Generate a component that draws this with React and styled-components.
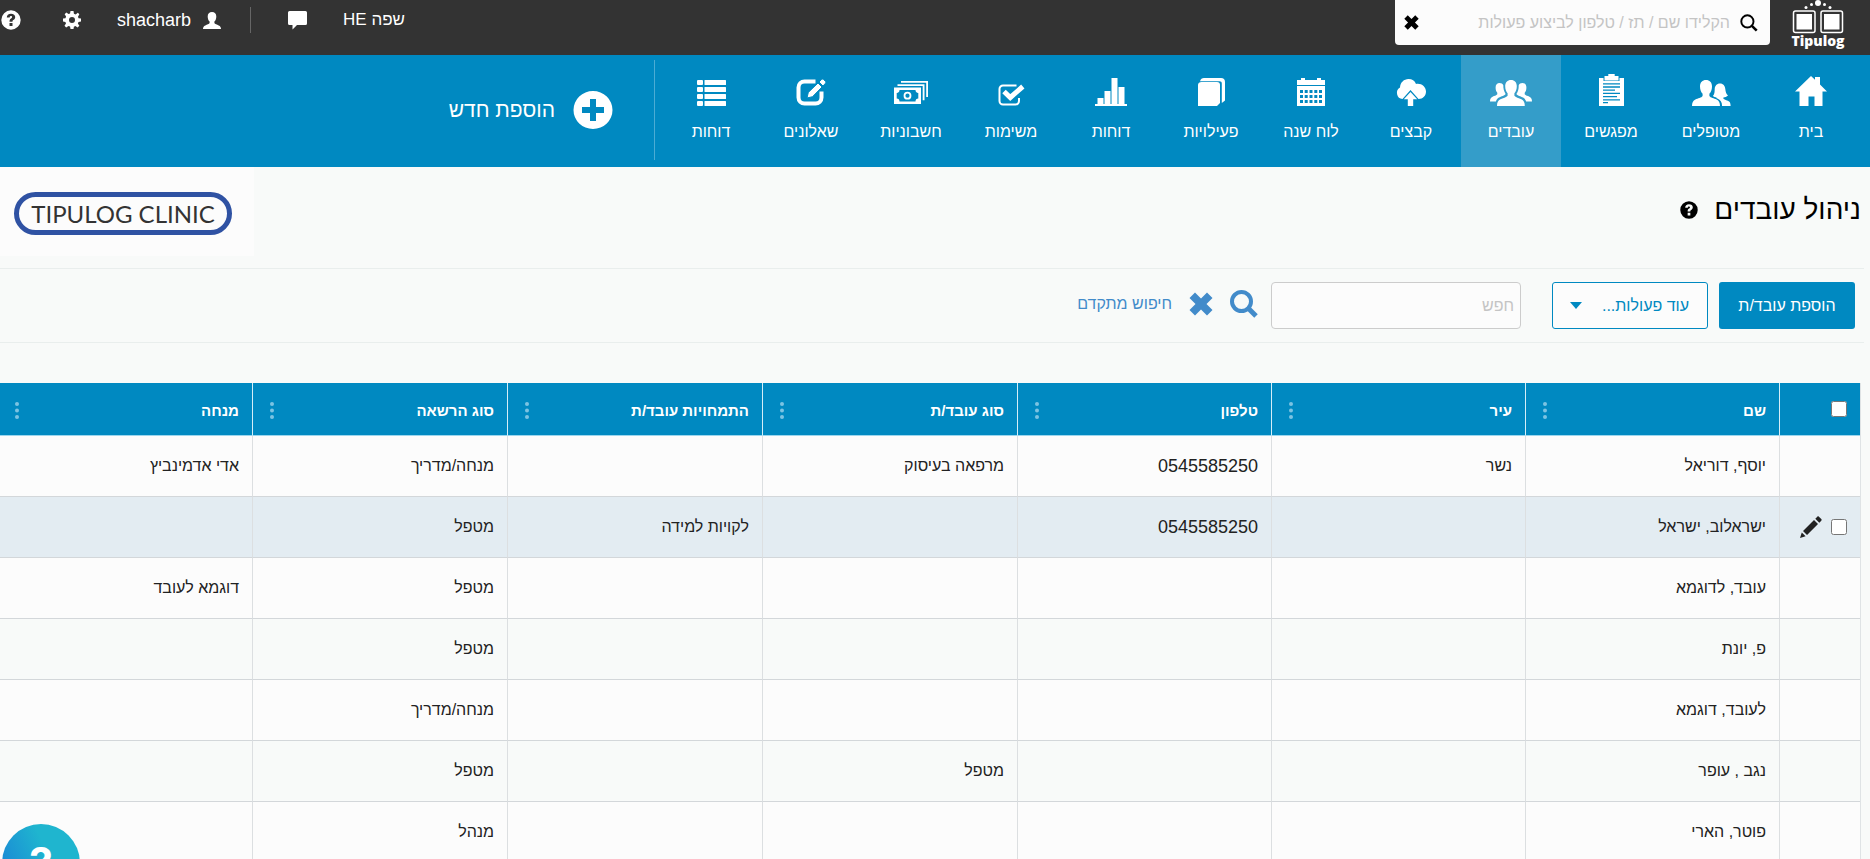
import styled, { createGlobalStyle } from "styled-components";

const GlobalStyle = createGlobalStyle`
  * {
    box-sizing: border-box;
  }

  html {
    scrollbar-width: none;
  }

  body {
    margin: 0;
    background: #f8faf9;
    color: #222;
    font-family: "Liberation Sans", Arial, sans-serif;
    font-size: 16px;
    overflow-x: hidden;
  }

  button, input, select {
    font: inherit;
    color: inherit;
  }

  button {
    padding: 0;
    border: 0;
    background: none;
    cursor: pointer;
  }

  a {
    color: inherit;
    text-decoration: none;
  }

  svg {
    display: block;
    flex: none;
  }
`;

/* ---------- icons ---------- */

const Icon = ({ w, h, children }) => (
  <svg width={w} height={h} viewBox={`0 0 ${w} ${h}`} fill="currentColor" aria-hidden="true">
    {children}
  </svg>
);

const HomeIcon = () => (
  <Icon w={32} h={30}>
    <path d="M16 0l4 3.8V1h5v7.6l7 7H27.500V30H19.500V20.500H13.500V30H4.500V15.600H0z" />
  </Icon>
);

const PatientsIcon = () => (
  <Icon w={39} h={26}>
    <path d="M14 0c3.600 0 6 2.300 6 6.500 0 3.200-1.100 5.700-2.600 7.200v2.300c1 1.800 4.800 2.300 7.200 3.500 2.400 1.200 3.400 3.200 3.400 6.500H0c0-3.300 1-5.300 3.400-6.500C5.800 18.300 9.600 17.800 10.600 16v-2.300C9.100 12.200 8 9.700 8 6.500 8 2.300 10.400 0 14 0z" />
    <path d="M28 3.500c3.300 0 5 2.400 5.300 5.500.3 3 .8 4.600 2.700 6.600-1.300 1.400-3 1.800-4.600 1.900v1.200c1.500 1.300 4.300 1.500 5.700 2.700 1.200 1 1.500 2.500 1.500 4.600h-8.500c-.1-4-1.600-6.200-4.700-7.500l-1.200-.5.500-.6c-1.500-.2-2.900-.6-3.800-1.500 1.800-2 1.700-4 1.800-6.900.2-3.100 2-5.500 5.300-5.500z" />
  </Icon>
);

const ClipboardIcon = () => (
  <Icon w={25} h={32}>
    <path d="M0 4h4.500v3h16V4H25v28H0z" />
    <path d="M5.500 2h3.800V0h6.400v2h3.800v4.500h-14z" />
    <path
      d="M4 9.800h17M4 13h17M4 16.200h12M4 19.400h17M4 22.600h14M4 25.800h17M4 28.600h5"
      stroke="#0089c1"
      strokeWidth="1.300"
      fill="none"
    />
  </Icon>
);

const TeamIcon = () => (
  <Icon w={42} h={26}>
    <path d="M21 0c3.600 0 5.800 2.300 5.800 6.300 0 3-1 5.500-2.400 7v2.500c1 1.700 4.600 2.300 7 3.500 2.300 1.200 3.400 3.200 3.400 6.700H7c0-3.500 1.100-5.500 3.400-6.700 2.400-1.200 6.200-1.800 7.200-3.500v-2.500c-1.400-1.500-2.400-4-2.400-7C15.200 2.300 17.400 0 21 0z" />
    <path d="M9.600 3c1.700 0 3.100.7 3.700 2.300-.1 3.200.6 6 2.300 8.600-.6 1.500-4.600 2.300-6.700 3.600-1.600 1-2.500 2.200-3 4H0c0-2.600.8-4 2.600-4.800 1.600-.8 3.800-1.100 4.700-2.400v-1.500C6.300 11.800 5.600 10 5.600 7.600 5.600 4.600 7.100 3 9.600 3z" />
    <path d="M32.400 3c-1.700 0-3.100.7-3.700 2.300.1 3.200-.6 6-2.300 8.600.6 1.500 4.600 2.300 6.700 3.600 1.600 1 2.500 2.200 3 4H42c0-2.600-.8-4-2.600-4.800-1.600-.8-3.800-1.100-4.700-2.400v-1.500c1-1 1.700-2.800 1.700-5.200C36.400 4.600 34.900 3 32.400 3z" />
  </Icon>
);

const CloudIcon = () => (
  <Icon w={30} h={27}>
    <path d="M6.500 20A6.200 6.200 0 0 1 4 8.500C4.200 3.500 8 0 12.500 0c3.600 0 6.300 1.900 7.500 4.900 5.300-1 10 2.700 10 7.600 0 4.300-3 7.500-7.500 7.500L14.500 11z" />
    <path d="M14.500 13l6.700 7.200h-4V27h-5.400v-6.800h-4z" />
  </Icon>
);

const CalendarIcon = () => (
  <Icon w={28} h={28}>
    <path d="M0 2h4V0h4v2h12V0h4v2h4v5H0z" />
    <path
      fillRule="evenodd"
      d="M0 8h28v20H0zM3 12h3v3H3zm4.700 0h3v3h-3zm4.800 0h3v3h-3zm4.800 0h3v3h-3zm4.700 0h3v3h-3zM3 17h3v3H3zm4.700 0h3v3h-3zm4.800 0h3v3h-3zm4.800 0h3v3h-3zm4.700 0h3v3h-3zM3 22h3v3H3zm4.700 0h3v3h-3zm4.800 0h3v3h-3zm4.800 0h3v3h-3zm4.700 0h3v3h-3z"
    />
  </Icon>
);

const BooksIcon = () => (
  <Icon w={27} h={28}>
    <path d="M0 7c0-2 1.500-3 3.500-3H19c2 0 3 1 3 3v18l-3 3H0z" />
    <path d="M2 3.200C2.700 1.200 4 0 6 0h17c2.600 0 4 1.500 4 4v18.500L23.800 25V5.500c0-1.500-.8-2.300-2.300-2.300z" />
  </Icon>
);

const ChartIcon = () => (
  <Icon w={32} h={28}>
    <path d="M0 26h2.500v-6h6v6h1V13h6v13h1V0h6v26h1V9h6v17H32v2H0z" />
  </Icon>
);

const TasksIcon = () => (
  <Icon w={27} h={22}>
    <path
      d="M18.500 1.500H5A3.500 3.500 0 0 0 1.500 5v12A3.500 3.500 0 0 0 5 20.500h12.500A3.500 3.500 0 0 0 21 17v-3"
      fill="none"
      stroke="currentColor"
      strokeWidth="2"
    />
    <path d="M6 7.500l6.300 6L24.800 2.500" fill="none" stroke="currentColor" strokeWidth="5" />
  </Icon>
);

const MoneyIcon = () => (
  <Icon w={34} h={25}>
    <path d="M7 0h27v16h-1.800V1.800H7zM3.500 3.200h27v16h-1.800V5H3.500z" />
    <path
      fillRule="evenodd"
      d="M0 6.500h27V23H0zM5.500 9c0 1.800-1 2.900-2.800 2.900v5.700c1.800 0 2.800 1 2.800 2.900h16c0-1.900 1-2.900 2.800-2.900v-5.700c-1.800 0-2.800-1.100-2.800-2.900z"
    />
    <circle cx="13.500" cy="14.700" r="3" fill="none" stroke="currentColor" strokeWidth="1.800" />
  </Icon>
);

const EditIcon = () => (
  <Icon w={30} h={27}>
    <path
      d="M19.500 2.500H8.500a6 6 0 0 0-6 6v10a6 6 0 0 0 6 6h11a6 6 0 0 0 6-6v-6"
      fill="none"
      stroke="currentColor"
      strokeWidth="4"
    />
    <path
      d="M11 19l1.300-5.600L22 4l4 4-9.500 9.700zM23 3l2.300-2.300c.8-.8 1.800-.8 2.500 0l1.400 1.400c.8.800.8 1.700 0 2.500L27 7z"
      stroke="#0089c1"
    />
  </Icon>
);

const ListIcon = () => (
  <Icon w={29} h={26}>
    {[0, 7, 14, 21].map((y) => (
      <g key={y}>
        <rect y={y} width="6" height="5" rx="1" />
        <rect x="7.500" y={y} width="21.500" height="5" rx="0.500" />
      </g>
    ))}
  </Icon>
);

const PlusIcon = () => (
  <Icon w={40} h={40}>
    <path
      fillRule="evenodd"
      d="M20 1a19.500 19 0 1 0 0 38 19.500 19 0 0 0 0-38zm-3 8h6v8h8v6h-8v8h-6v-8H9v-6h8z"
    />
  </Icon>
);

const UserIcon = () => (
  <Icon w={18} h={17}>
    <path d="M9 0c2.700 0 4.300 1.700 4.300 4.400 0 2.300-.7 4-1.900 5.100v1.600c.4 1 2.600 1.600 4.300 2.300C17.400 14.100 18 15.200 18 17H0c0-1.800.6-2.900 2.300-3.600 1.700-.7 3.900-1.300 4.300-2.300V9.500C5.400 8.400 4.700 6.700 4.700 4.400 4.700 1.700 6.300 0 9 0z" />
  </Icon>
);

const CogIcon = () => (
  <svg width="18" height="18" viewBox="0 0 24 24" fill="currentColor" aria-hidden="true">
    <path
      fillRule="evenodd"
      d="M10 0h4l.6 3.600 2.200.9L19.800 2.300l2 2L20 7.500l.7 2L24 10v4l-3.300.6-.9 2.200 2 3-2.300 2.200-3-1.900-2 .8L14 24h-4l-.6-3.200-2.100-.9-3.100 2L2 19.700l2-3-.8-2.100L0 14v-4l3.300-.5.8-2.200-1.900-3 2.200-2.200 3 2 2-.8zm2 8a4 4 0 1 0 0 8 4 4 0 0 0 0-8z"
    />
  </svg>
);

const HelpIcon = ({ size }) => (
  <svg width={size} height={size} viewBox="0 0 20 20" fill="currentColor" aria-hidden="true">
    <path
      fillRule="evenodd"
      d="M10 .3a9.700 9.700 0 1 0 0 19.400A9.700 9.700 0 0 0 10 .3zM8.500 13h3v3h-3zm0-1.200c0-2 .4-2.600 1.600-3.400.8-.5 1-.8 1-1.300 0-.7-.4-1-1.100-1-.9 0-1.300.5-1.300 1.500H5.800C5.800 5.200 7.400 3.700 10 3.700c2.600 0 4.200 1.300 4.200 3.300 0 1.400-.6 2.200-1.800 3-.8.5-.9.8-.9 1.800z"
    />
  </svg>
);

const ChatIcon = () => (
  <Icon w={19} h={19}>
    <path d="M1.500 0h16A1.500 1.500 0 0 1 19 1.500v11a1.500 1.500 0 0 1-1.500 1.500H9l-4.500 4.500V14h-3A1.500 1.500 0 0 1 0 12.500v-11A1.500 1.500 0 0 1 1.500 0z" />
  </Icon>
);

const SearchIcon = ({ size, stroke }) => (
  <svg width={size} height={size} viewBox="0 0 28 28" fill="none" stroke="currentColor" aria-hidden="true">
    <circle cx="11.500" cy="11.500" r="9.500" strokeWidth={stroke} />
    <path d="M18.500 18.500l7.500 7.500" strokeWidth={stroke + 1} />
  </svg>
);

const CloseIcon = ({ size }) => (
  <svg width={size} height={size} viewBox="0 0 24 24" fill="currentColor" aria-hidden="true">
    <path d="M6 0.500L12 6.500l6-6L23.500 6l-6 6 6 6-5.500 5.500-6-6-6 6L.5 18l6-6-6-6z" />
  </svg>
);

const PencilIcon = () => (
  <Icon w={22} h={22}>
    <path d="M0 22l1.800-5.600 3.800 3.800zM3 15L14 4l4 4L7 19zM15.300 2.700l2-2c.5-.5 1.100-.5 1.600 0l2.400 2.400c.5.500.5 1.100 0 1.600l-2 2z" />
  </Icon>
);

const DotsIcon = () => (
  <Icon w={4} h={17}>
    <circle cx="2" cy="2" r="2" />
    <circle cx="2" cy="8.500" r="2" />
    <circle cx="2" cy="15" r="2" />
  </Icon>
);

const BrandIcon = () => (
  <Icon w={52} h={34}>
    <circle cx="26" cy="3" r="3" />
    <circle cx="19.500" cy="4.500" r="1.500" />
    <circle cx="32.500" cy="4.500" r="1.500" />
    <circle cx="14" cy="7.500" r="1.500" />
    <circle cx="38" cy="7.500" r="1.500" />
    <g fill="none" stroke="currentColor" strokeWidth="1.500">
      <rect x="1.500" y="11" width="21.500" height="21.500" rx="2" />
      <rect x="29" y="11" width="21.500" height="21.500" rx="2" />
    </g>
    <rect x="4.500" y="14" width="15.500" height="15.500" />
    <rect x="32" y="14" width="15.500" height="15.500" />
  </Icon>
);

/* ---------- top bar ---------- */

const TopBar = styled.header`
  display: flex;
  align-items: flex-start;
  height: 55px;
  padding-right: 26px;
  background: #333;
  color: #fff;
`;

const Brand = styled.a`
  display: flex;
  flex-direction: column;
  align-items: center;
  width: 52px;
  font: 800 14px/14px "Open Sans", sans-serif;
`;

const QuickSearch = styled.form`
  display: flex;
  align-items: center;
  gap: 10px;
  width: 375px;
  height: 45px;
  margin-right: 22px;
  padding: 0 12px 0 9px;
  border-radius: 0 0 4px 4px;
  background: #fcfcfc;
  color: #000;
`;

const QuickInput = styled.input`
  flex: 1;
  min-width: 0;
  height: 40px;
  padding: 0;
  border: 0;
  outline: 0;
  background: none;

  &::placeholder {
    color: #c4c4c4;
    opacity: 1;
  }
`;

const UserMenu = styled.div`
  display: flex;
  align-items: center;
  height: 40px;
  margin-right: auto;
`;

const Language = styled.button`
  margin-left: 36px;
  font-size: 17px;
`;

const MenuDivider = styled.span`
  width: 1px;
  height: 26px;
  margin: 0 37px 0 29px;
  background: #666;
`;

const Account = styled.button`
  display: flex;
  align-items: center;
  gap: 12px;
  margin-left: 36px;
  font-size: 18px;
`;

const HelpLink = styled.a`
  margin: 0 42px 0 1px;
`;

/* ---------- main nav ---------- */

const Nav = styled.nav`
  display: flex;
  height: 112px;
  padding-right: 9px;
  background: #0089c1;
  color: #fff;
`;

const NavItem = styled.a`
  display: flex;
  flex-direction: column;
  align-items: center;
  width: 100px;
  background: ${({ $active }) => ($active ? "#349dc9" : "none")};
`;

const NavIcon = styled.span`
  display: flex;
  align-items: flex-end;
  height: 51px;
  margin-bottom: 17px;
`;

const AddNew = styled.button`
  display: flex;
  align-items: center;
  gap: 18px;
  margin: 5px 6px 7px 0;
  padding-right: 41px;
  border-right: 1px solid #4bacd4;
  font-size: 21px;
`;

/* ---------- page header ---------- */

const PageHeader = styled.div`
  display: flex;
  justify-content: space-between;
  height: 101px;
  padding-right: 9px;
`;

const Title = styled.h1`
  display: flex;
  align-items: center;
  gap: 16px;
  height: 86px;
  margin: 0;
  color: #000;
  font-size: 28px;
  font-weight: 400;
`;

const ClinicBox = styled.div`
  display: flex;
  align-items: center;
  justify-content: flex-end;
  width: 254px;
  height: 89px;
  padding: 4px 0 0 14px;
  background: #fcfcfc;
`;

const ClinicBadge = styled.div`
  display: flex;
  align-items: center;
  justify-content: center;
  width: 218px;
  height: 43px;
  border: 5px solid #2f52a3;
  border-radius: 22px;
  color: #333;
  font: 24px/32px Lato, sans-serif;
  white-space: nowrap;
`;

/* ---------- toolbar ---------- */

const Toolbar = styled.div`
  display: flex;
  align-items: center;
  height: 75px;
  margin: 0 6px 40px 0;
  padding-right: 9px;
  border: solid #e9eeed;
  border-width: 1px 0;
`;

const PrimaryButton = styled.button`
  width: 136px;
  height: 47px;
  border-radius: 3px;
  background: #0089c1;
  color: #fff;
`;

const SelectBox = styled.label`
  position: relative;
  margin: 0 11px 0 31px;
  color: #0089c1;
`;

const ActionSelect = styled.select`
  appearance: none;
  width: 156px;
  height: 47px;
  padding: 0 18px 0 30px;
  border: 1px solid #0089c1;
  border-radius: 3px;
  background: #fcfcfc;
`;

const Caret = styled.span`
  position: absolute;
  left: 18px;
  top: 20px;
  border: 6px solid transparent;
  border-top: 7px solid #0089c1;
  border-bottom: 0;
  pointer-events: none;
`;

const FilterInput = styled.input`
  width: 250px;
  height: 47px;
  padding: 0 6px;
  border: 1px solid #ccc;
  border-radius: 4px;
  background: #fcfcfc;

  &::placeholder {
    color: #c4c4c4;
    opacity: 1;
  }
`;

const LinkActions = styled.div`
  display: flex;
  align-items: center;
  gap: 17px;
  margin: 0 13px 3px 0;
  color: #428bca;

  button {
    color: inherit;
  }
`;

/* ---------- table ---------- */

const TableWrap = styled.div`
  margin-right: 9px;
  border-right: 1px solid #dfe3e5;
  overflow: hidden;
`;

const Table = styled.table`
  width: calc(100% + 3px);
  table-layout: fixed;
  border-collapse: separate;
  border-spacing: 0;
`;

const Col = styled.col`
  width: ${({ $width }) => $width};
`;

const HeadCell = styled.th`
  height: 53px;
  padding: 2px 13px 0 17px;
  border-left: 1px solid #d5eef8;
  border-bottom: 1px solid #9bd6ee;
  background: #0089c1;
  color: #fff;
  font-size: 15px;
  text-align: right;
`;

const HeadContent = styled.div`
  display: flex;
  align-items: center;
  justify-content: space-between;
`;

const ColumnMenu = styled.button`
  height: 24px;
  color: #7cc3e2;
`;

const Row = styled.tr`
  background: ${({ $hover }) => ($hover ? "#e3ecf2" : "#fcfcfc")};

  &:nth-child(even) {
    background: ${({ $hover }) => ($hover ? "#e3ecf2" : "#f8faf9")};
  }
`;

const Cell = styled.td`
  height: 61px;
  padding: 0 13px;
  border-left: 1px solid #dcdfe1;
  border-bottom: 1px solid #d3d7da;
  font-size: ${({ $numeric }) => ($numeric ? "18px" : "16px")};
`;

const RowTools = styled.div`
  display: flex;
  align-items: center;
  gap: 9px;
`;

const Check = styled.input`
  width: 16px;
  height: 16px;
  margin: 0;
`;

const ChatBubble = styled.button`
  position: fixed;
  left: 2px;
  bottom: -43px;
  width: 78px;
  height: 78px;
  border-radius: 50%;
  background: linear-gradient(65deg, #1a85d6 10%, #1fb5cf 60%);
  color: #fff;
  font: 700 42px/78px Inter, sans-serif;
`;

const navItems = [
  { label: "בית", icon: HomeIcon },
  { label: "מטופלים", icon: PatientsIcon },
  { label: "מפגשים", icon: ClipboardIcon },
  { label: "עובדים", icon: TeamIcon, active: true },
  { label: "קבצים", icon: CloudIcon },
  { label: "לוח שנה", icon: CalendarIcon },
  { label: "פעילויות", icon: BooksIcon },
  { label: "דוחות", icon: ChartIcon },
  { label: "משימות", icon: TasksIcon },
  { label: "חשבוניות", icon: MoneyIcon },
  { label: "שאלונים", icon: EditIcon },
  { label: "דוחות", icon: ListIcon },
];

const columns = [
  { key: "name", label: "שם", width: "254px" },
  { key: "city", label: "עיר", width: "254px" },
  { key: "phone", label: "טלפון", width: "254px", numeric: true },
  { key: "type", label: "סוג עובד/ת", width: "auto" },
  { key: "skills", label: "התמחויות עובד/ת", width: "auto" },
  { key: "role", label: "סוג הרשאה", width: "auto" },
  { key: "mentor", label: "מנחה", width: "auto" },
];

const employees = [
  { name: "יוסף, דוריאל", city: "נשר", phone: "0545585250", type: "מרפאה בעיסוק", role: "מנחה/מדריך", mentor: "אדי אדמינביץ" },
  { name: "ישראלוב, ישראל", phone: "0545585250", skills: "לקויות למידה", role: "מטפל", hover: true },
  { name: "עובד, לדוגמא", role: "מטפל", mentor: "דוגמא לעובד" },
  { name: "פ, יונת", role: "מטפל" },
  { name: "לעובד, דוגמא", role: "מנחה/מדריך" },
  { name: "נגב , עופר", type: "מטפל", role: "מטפל" },
  { name: "פוטר, הארי", role: "מנהל" },
];

const App = () => {
  return (
    <div dir="rtl" lang="he">
      <GlobalStyle />
      <TopBar>
        <Brand href="#">
          <BrandIcon />
          Tipulog
        </Brand>
        <QuickSearch>
          <button type="button" aria-label="חיפוש">
            <SearchIcon size={18} stroke={3} />
          </button>
          <QuickInput
            aria-label="חיפוש מהיר"
            placeholder="הקלידו שם / תז / טלפון לביצוע פעולות"
          />
          <button type="button" aria-label="ניקוי">
            <CloseIcon size={15} />
          </button>
        </QuickSearch>
        <UserMenu>
          <Language type="button">שפה HE</Language>
          <button type="button" aria-label="הודעות">
            <ChatIcon />
          </button>
          <MenuDivider />
          <Account type="button">
            <UserIcon />
            shacharb
          </Account>
          <button type="button" aria-label="הגדרות">
            <CogIcon />
          </button>
          <HelpLink href="#" aria-label="עזרה">
            <HelpIcon size={20} />
          </HelpLink>
        </UserMenu>
      </TopBar>

      <Nav>
        {navItems.map(({ label, icon: ItemIcon, active }, i) => (
          <NavItem key={i} href="#" $active={active}>
            <NavIcon>
              <ItemIcon />
            </NavIcon>
            {label}
          </NavItem>
        ))}
        <AddNew type="button">
          <PlusIcon />
          הוספת חדש
        </AddNew>
      </Nav>

      <PageHeader>
        <Title>
          ניהול עובדים
          <HelpIcon size={18} />
        </Title>
        <ClinicBox>
          <ClinicBadge dir="ltr">TIPULOG CLINIC</ClinicBadge>
        </ClinicBox>
      </PageHeader>

      <Toolbar>
        <PrimaryButton type="button">הוספת עובד/ת</PrimaryButton>
        <SelectBox>
          <ActionSelect aria-label="עוד פעולות">
            <option>עוד פעולות...</option>
          </ActionSelect>
          <Caret />
        </SelectBox>
        <FilterInput aria-label="חפש" placeholder="חפש" />
        <LinkActions>
          <button type="button" aria-label="חיפוש">
            <SearchIcon size={28} stroke={4} />
          </button>
          <button type="button" aria-label="ניקוי">
            <CloseIcon size={24} />
          </button>
          <a href="#">חיפוש מתקדם</a>
        </LinkActions>
      </Toolbar>

      <TableWrap>
        <Table>
          <colgroup>
            <Col $width="81px" />
            {columns.map((c) => (
              <Col key={c.key} $width={c.width} />
            ))}
          </colgroup>
          <thead>
            <tr>
              <HeadCell>
                <Check type="checkbox" aria-label="בחירת הכל" />
              </HeadCell>
              {columns.map((c) => (
                <HeadCell key={c.key}>
                  <HeadContent>
                    {c.label}
                    <ColumnMenu type="button" aria-label={`תפריט ${c.label}`}>
                      <DotsIcon />
                    </ColumnMenu>
                  </HeadContent>
                </HeadCell>
              ))}
            </tr>
          </thead>
          <tbody>
            {employees.map((e) => (
              <Row key={e.name} $hover={e.hover}>
                <Cell>
                  {e.hover && (
                    <RowTools>
                      <Check type="checkbox" aria-label={e.name} />
                      <button type="button" aria-label="עריכה">
                        <PencilIcon />
                      </button>
                    </RowTools>
                  )}
                </Cell>
                {columns.map((c) => (
                  <Cell key={c.key} $numeric={c.numeric}>
                    {e[c.key]}
                  </Cell>
                ))}
              </Row>
            ))}
          </tbody>
        </Table>
      </TableWrap>

      <ChatBubble type="button" aria-label="עזרה">
        ?
      </ChatBubble>
    </div>
  );
};

export default App;
